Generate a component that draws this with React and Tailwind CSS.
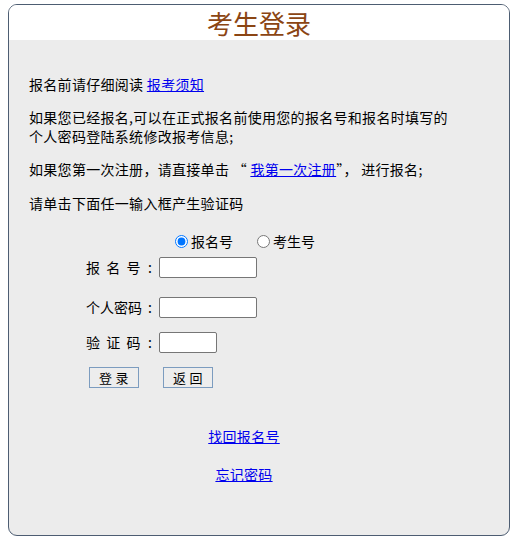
import React, { useState } from "react";

const font = { fontFamily: '"Noto Sans CJK SC", "Noto Sans", sans-serif' };

const Field = ({ label, width, className }) => (
  <div className={"ml-[57px] flex items-center " + className}>
    <span className="w-[57px] whitespace-pre">{label}</span>
    <span className="w-[14px] text-center">:</span>
    <input type="text" className={"ml-[2px] h-[21px] bg-white border border-[#767676] rounded-[2px] px-1 " + width} />
  </div>
);

const App = () => {
  const [kind, setKind] = useState("bmh");

  return (
    <div className="pt-1 pl-2 bg-white min-h-[542px]" style={font}>
      <div className="w-[502px] h-[532px] border border-[#4d5d72] rounded-[9px] overflow-hidden bg-[#ececec] text-black">
        <div className="h-[35px] bg-white text-center text-[26px] leading-[35px] text-[#8b4513]">
          考生登录
        </div>

        <div className="w-[430px] ml-[20px] pt-[35px] text-[14px] leading-[19px] tracking-[0.3px]">
          <p>
            报名前请仔细阅读{" "}
            <a href="#" className="text-[#0000ee] underline">报考须知</a>
          </p>
          <p className="mt-[14px]">
            如果您已经报名,可以在正式报名前使用您的报名号和报名时填写的
            <br />
            个人密码登陆系统修改报考信息;
          </p>
          <p className="mt-[14px] whitespace-pre">
            如果您第一次注册，请直接单击 “ <a href="#" className="text-[#0000ee] underline">我第一次注册</a>”， 进行报名;
          </p>
          <p className="mt-[15px]">请单击下面任一输入框产生验证码</p>

          <div className="mt-[19px] ml-[146px] flex items-center h-[18px] tracking-normal">
            <input
              type="radio"
              name="kind"
              checked={kind === "bmh"}
              onChange={() => setKind("bmh")}
              className="w-[13px] h-[13px]"
            />
            <span className="ml-[3px]">报名号</span>
            <input
              type="radio"
              name="kind"
              checked={kind === "ksh"}
              onChange={() => setKind("ksh")}
              className="ml-[24px] w-[13px] h-[13px]"
            />
            <span className="ml-[3px]">考生号</span>
          </div>

          <Field label="报  名  号" width="w-[98px]" className="mt-[7px] tracking-normal" />
          <Field label="个人密码" width="w-[98px]" className="mt-[19px] tracking-normal" />
          <Field label="验  证  码" width="w-[58px]" className="mt-[14px] tracking-normal" />

          <div className="mt-[14px] ml-[60px] flex gap-[24px]">
            <button className="w-[50px] h-[21px] border border-[#7c9cbf] bg-[#ededed] text-[13px] leading-[19px] whitespace-pre">
              登 录
            </button>
            <button className="w-[50px] h-[21px] border border-[#7c9cbf] bg-[#ededed] text-[13px] leading-[19px] whitespace-pre">
              返 回
            </button>
          </div>

          <div className="mt-[39px] text-center">
            <a href="#" className="text-[#0000ee] underline">找回报名号</a>
          </div>
          <div className="mt-[19px] text-center">
            <a href="#" className="text-[#0000ee] underline">忘记密码</a>
          </div>
        </div>
      </div>
    </div>
  );
};

export default App;
